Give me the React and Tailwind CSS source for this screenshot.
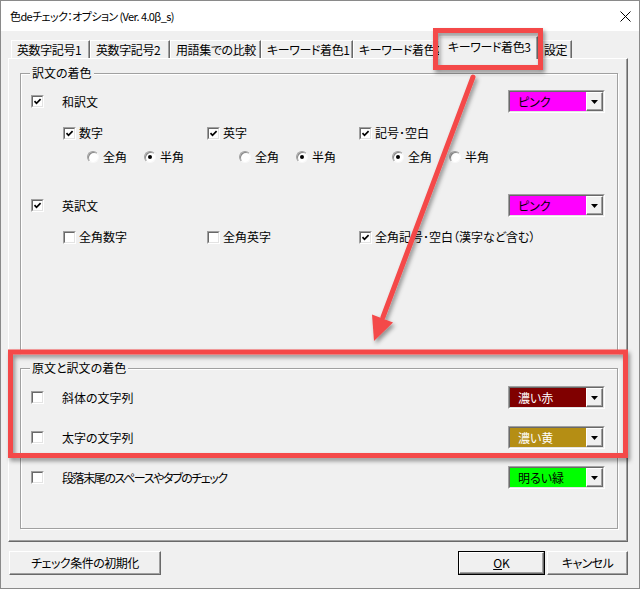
import React from 'react'

function Check({ on }) {
  return (
    <span className="block w-[13px] h-[13px] shrink-0 border border-t-[#a0a0a0] border-l-[#a0a0a0] border-r-white border-b-white">
      <span className="flex w-full h-full items-center justify-center bg-white border border-t-[#696969] border-l-[#696969] border-r-[#e3e3e3] border-b-[#e3e3e3]">
        {on && (
          <svg width="9" height="9" viewBox="0 0 9 9">
            <path d="M1.5 4.2 L3.5 6.3 L7.6 2.2" fill="none" stroke="#000" strokeWidth="1.7" />
          </svg>
        )}
      </span>
    </span>
  )
}

function Radio({ on }) {
  return (
    <span className="flex w-[12px] h-[12px] shrink-0 items-center justify-center rounded-full bg-white border border-t-[#a0a0a0] border-l-[#a0a0a0] border-r-[#f8f8f8] border-b-[#f8f8f8] shadow-[inset_1px_1px_0_#8a8a8a]">
      {on && <span className="block w-[4px] h-[4px] rounded-full bg-black" />}
    </span>
  )
}

function Combo({ face, text }) {
  return (
    <div className="w-[97px] h-[23px] flex border border-t-[#a0a0a0] border-l-[#a0a0a0] border-r-white border-b-white">
      <div className="flex-1 flex border border-t-[#696969] border-l-[#696969] border-r-[#e3e3e3] border-b-[#e3e3e3]">
        <div className={`flex-1 flex items-center pl-[8px] ${face}`}>{text}</div>
        <div className="w-[17px] flex items-center justify-center bg-[#f0f0f0] border border-t-white border-l-white border-r-[#696969] border-b-[#696969] shadow-[inset_-1px_-1px_0_#a0a0a0]">
          <svg width="7" height="4" viewBox="0 0 7 4">
            <path d="M0 0 H7 L3.5 4 Z" fill="#000" />
          </svg>
        </div>
      </div>
    </div>
  )
}

function Opt({ on, children, className = '' }) {
  return (
    <div className={`flex items-center gap-[3px] ${className}`}>
      <Check on={on} />
      <span className="whitespace-nowrap">{children}</span>
    </div>
  )
}

function RadioPair({ left, className = '' }) {
  return (
    <div className={`flex ${className}`}>
      <div className="w-[57px] flex items-center gap-[4px]">
        <Radio on={left} />
        <span>全角</span>
      </div>
      <div className="flex items-center gap-[4px]">
        <Radio on={!left} />
        <span>半角</span>
      </div>
    </div>
  )
}

// group box: etched frame with the caption sitting on the top line
function Group({ title, className, children }) {
  return (
    <div
      className={`w-[598px] border border-[#a0a0a0] shadow-[inset_1px_1px_0_white,1px_1px_0_white] pl-[10px] pr-[12px] ${className}`}
    >
      <div className="-mt-[8px] -ml-[1px] w-fit px-[2px] leading-[14px] bg-[#f0f0f0]">{title}</div>
      {children}
    </div>
  )
}

function Button({ children, def, className = '' }) {
  return (
    <div className={`h-[24px] ${def ? 'border border-black' : ''} ${className}`}>
      <div className="h-full flex items-center justify-center bg-[#f0f0f0] border border-t-white border-l-white border-r-[#696969] border-b-[#696969] shadow-[inset_-1px_-1px_0_#a0a0a0]">
        {children}
      </div>
    </div>
  )
}

const tabs = [
  { label: '英数字記号1', w: 'w-[79px]' },
  { label: '英数字記号2', w: 'w-[80px]' },
  { label: '用語集での比較', w: 'w-[91px]' },
  { label: 'キーワード着色1', w: 'w-[92px]' },
  { label: 'キーワード着色2', w: 'w-[88px]' },
  { label: 'キーワード着色3', w: 'w-[99px]', active: true },
  { label: '設定', w: 'w-[34px]' },
]

export default function App() {
  return (
    <div className="relative w-[640px] h-[589px] overflow-hidden border border-[#8a8a8a] bg-[#f0f0f0] text-[12px] leading-[16px] text-black font-['Noto_Sans_CJK_JP',sans-serif] [font-feature-settings:'palt']">
      {/* title bar */}
      <div className="h-[30px] bg-white flex items-center justify-between pl-[9px] pr-[8px]">
        <span className="text-[11px] tracking-[-0.6px]">色deチェック：オプション (Ver. 4.0β_s)</span>
        <svg width="11" height="11" viewBox="0 0 11 11">
          <path d="M0.5 0.5 L10.5 10.5 M10.5 0.5 L0.5 10.5" stroke="#000" strokeWidth="1" />
        </svg>
      </div>

      {/* tabs */}
      <div className="mt-[5px] h-[22px] pl-[10px] flex items-end tracking-[-0.4px]">
        {tabs.map((t) =>
          t.active ? (
            <div
              key={t.label}
              className={`${t.w} -ml-[2px] -mb-px h-[23px] relative z-10 bg-[#f0f0f0] border-t border-l border-white border-r border-r-[#696969] shadow-[inset_-1px_0_0_#a0a0a0] pl-[8px] pt-[2px] whitespace-nowrap`}
            >
              {t.label}
            </div>
          ) : (
            <div
              key={t.label}
              className={`${t.w} h-[18px] overflow-hidden whitespace-nowrap border-t border-l border-white border-r border-r-[#696969] shadow-[inset_-1px_0_0_#a0a0a0] pl-[5px] leading-[17px]`}
            >
              {t.label}
            </div>
          )
        )}
      </div>

      {/* panel */}
      <div className="ml-[7px] w-[620px] h-[484px] border border-t-white border-l-white border-r-[#696969] border-b-[#696969] shadow-[inset_-1px_-1px_0_#a0a0a0] pt-[14px] pl-[11px]">
        <Group title="訳文の着色" className="h-[281px]">
          <div className="mt-[10px] h-[23px] flex items-center">
            <Check on />
            <span className="ml-[18px]">和訳文</span>
            <div className="ml-auto">
              <Combo face="bg-[#ff00ff] text-black" text="ピンク" />
            </div>
          </div>
          <div className="mt-[12px] h-[16px] pl-[32px] flex">
            <Opt on className="w-[144px]">数字</Opt>
            <Opt on className="w-[152px]">英字</Opt>
            <Opt on>記号･空白</Opt>
          </div>
          <div className="mt-[8px] h-[16px] pl-[56px] flex">
            <RadioPair left={false} className="w-[152px]" />
            <RadioPair left={false} className="w-[153px]" />
            <RadioPair left />
          </div>
          <div className="mt-[29px] h-[23px] flex items-center">
            <Check on />
            <span className="ml-[18px]">英訳文</span>
            <div className="ml-auto">
              <Combo face="bg-[#ff00ff] text-black" text="ピンク" />
            </div>
          </div>
          <div className="mt-[12px] h-[16px] pl-[32px] flex">
            <Opt className="w-[144px]">全角数字</Opt>
            <Opt className="w-[152px]">全角英字</Opt>
            <Opt on>全角記号･空白（漢字など含む）</Opt>
          </div>
        </Group>

        <Group title="原文と訳文の着色" className="mt-[14px] h-[161px]">
          <div className="mt-[11px] h-[23px] flex items-center">
            <Check />
            <span className="ml-[18px]">斜体の文字列</span>
            <div className="ml-auto">
              <Combo face="bg-[#800000] text-white" text="濃い赤" />
            </div>
          </div>
          <div className="mt-[17px] h-[23px] flex items-center">
            <Check />
            <span className="ml-[18px]">太字の文字列</span>
            <div className="ml-auto">
              <Combo face="bg-[#b58e14] text-white" text="濃い黄" />
            </div>
          </div>
          <div className="mt-[17px] h-[23px] flex items-center">
            <Check />
            <span className="ml-[18px] tracking-[-1.4px]">段落末尾のスペースやタブのチェック</span>
            <div className="ml-auto">
              <Combo face="bg-[#00ff00] text-black" text="明るい緑" />
            </div>
          </div>
        </Group>
      </div>

      {/* bottom buttons */}
      <div className="mt-[9px] flex pl-[8px] pr-[11px]">
        <Button className="w-[152px]">
          <span className="tracking-[-0.5px]">チェック条件の初期化</span>
        </Button>
        <Button def className="ml-auto w-[87px]">
          <span>
            <span className="underline">O</span>K
          </span>
        </Button>
        <Button className="ml-[2px] w-[81px]">
          <span className="tracking-[-0.6px]">キャンセル</span>
        </Button>
      </div>

      {/* annotation overlay */}
      <svg className="absolute -left-px -top-px pointer-events-none z-20" width="640" height="589" viewBox="0 0 640 589">
        <defs>
          <filter id="sh" x="-10%" y="-10%" width="130%" height="130%">
            <feDropShadow dx="2" dy="3" stdDeviation="2" floodColor="#000" floodOpacity="0.4" />
          </filter>
        </defs>
        <g filter="url(#sh)" fill="none" stroke="#f44848">
          <rect x="435.5" y="30.5" width="105" height="37" strokeWidth="5" />
          <rect x="10.5" y="352" width="615" height="103.5" strokeWidth="5" />
          <line x1="473" y1="77" x2="383" y2="317" strokeWidth="5" strokeLinecap="round" />
          <polygon points="372,314.5 393,322.5 374,341" fill="#f44848" stroke="none" />
        </g>
      </svg>
    </div>
  )
}
